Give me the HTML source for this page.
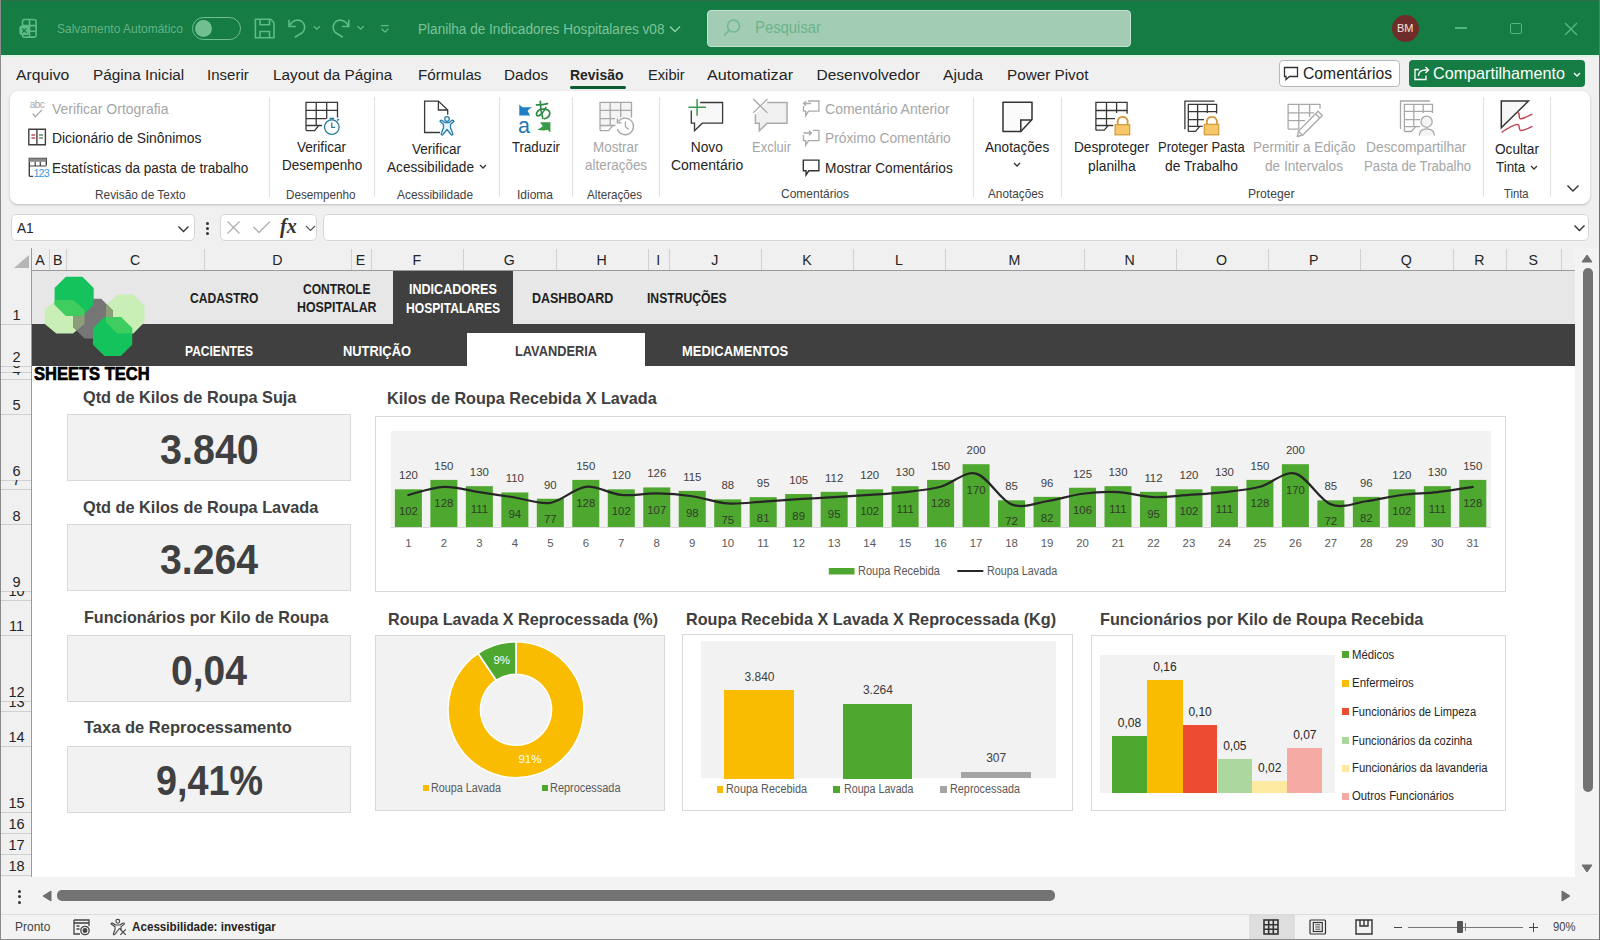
<!DOCTYPE html>
<html><head><meta charset="utf-8">
<style>
*{margin:0;padding:0;box-sizing:border-box}
html,body{width:1600px;height:940px;overflow:hidden;background:#f0f0f0;font-family:"Liberation Sans",sans-serif;color:#242424;position:relative}
.a{position:absolute}
.t{position:absolute;white-space:pre;line-height:1}
</style></head><body>
<div class="a" style="left:0;top:0;width:1600px;height:56px;background:#157c43"></div>
<div class="a" style="left:0;top:55px;width:1600px;height:2px;background:#d8f5e2"></div>
<div class="a" style="left:0;top:0;width:1600px;height:1px;background:#2f6b48"></div>
<svg class="a" style="left:0;top:0" width="400" height="56" viewBox="0 0 400 56" fill="none" stroke="#5dbb85" stroke-width="1.6">
<rect x="22.5" y="19.5" width="13.6" height="17.6" rx="2.2"/><path d="M29.5 19.5V37M22.5 25.6H36.1M29.5 31.3H36.1"/>
<rect x="19.4" y="25.8" width="9.7" height="9.3" rx="2" fill="#5dbb85" stroke="none"/><path d="M22 28.3l4.5 4.5M26.5 28.3l-4.5 4.5" stroke="#137a43" stroke-width="1.2"/>
<path d="M255.4 19.3H270.5L274 22.8V37.8H255.4Z"/><path d="M260 19.3V24.7H269.5V19.3M260 37.8V31.5H269.5V37.8"/>
<path d="M289 19.7V26.5H295.8"/><path d="M289.5 26C292 20.5 298 18.5 302 21.5C305.5 24.5 305.5 29.5 302.5 32.5L294.9 37.3"/>
<path d="M313.8 26.2l3 3 3-3M357.6 26.2l3 3 3-3" stroke-width="1.3"/>
<path d="M348.8 19.7V26.5H342"/><path d="M348.3 26C345.8 20.5 339.8 18.5 335.8 21.5C332.3 24.5 332.3 29.5 335.3 32.5L342.9 37.3"/>
<path d="M381 25.6H388.7M381.6 28.8l3.4 3.4 3.4-3.4" stroke-width="1.3"/>
</svg>
<div class="t" style="left:57.00px;top:23.20px;font-size:12.70px;color:#64b286;transform:scaleX(0.9453);transform-origin:0 0;">Salvamento Automático</div>
<div class="a" style="left:192px;top:16.5px;width:49px;height:23.5px;border:1.8px solid #6fbf90;border-radius:12px"></div>
<div class="a" style="left:194.5px;top:19.5px;width:17.5px;height:17.5px;border-radius:50%;background:#6fbf90"></div>
<div class="t" style="left:417.50px;top:22.77px;font-size:13.80px;color:#7cc49c;transform:scaleX(0.9859);transform-origin:0 0;">Planilha de Indicadores Hospitalares v08</div>
<svg class="a" style="left:669px;top:25px" width="12" height="8" viewBox="0 0 12 8" fill="none" stroke="#8fd1aa" stroke-width="1.4"><path d="M1 1.5l5 5 5-5"/></svg>
<div class="a" style="left:706.5px;top:10px;width:424px;height:36.5px;background:#a2ccb3;border:1px solid #c4e3d0;border-radius:4px"></div>
<svg class="a" style="left:722px;top:18px" width="20" height="20" viewBox="0 0 20 20" fill="none" stroke="#70b890" stroke-width="1.6"><circle cx="11.5" cy="8" r="6"/><path d="M7.3 12.2L2 17.5"/></svg>
<div class="t" style="left:755.00px;top:19.90px;font-size:16.00px;color:#6db48b;transform:scaleX(0.9275);transform-origin:0 0;">Pesquisar</div>
<div class="a" style="left:1392px;top:14.5px;width:27px;height:27px;border-radius:50%;background:#6e2d29"></div>
<div class="t" style="left:1397.25px;top:22.73px;font-size:11.50px;color:#f3e6e4;transform:scaleX(0.9565);transform-origin:0 0;">BM</div>
<div class="a" style="left:1455px;top:27px;width:12px;height:1.5px;background:#4fb87a"></div>
<div class="a" style="left:1510px;top:23px;width:12px;height:11px;border:1.5px solid #4fb87a;border-radius:2px"></div>
<svg class="a" style="left:1564px;top:21.5px" width="14" height="14" viewBox="0 0 14 14" stroke="#4fb87a" stroke-width="1.5"><path d="M1 1l12 12M13 1L1 13"/></svg>
<div class="t" style="left:16.25px;top:67.23px;font-size:15.50px;color:#242424;transform:scaleX(1.0131);transform-origin:0 0;">Arquivo</div>
<div class="t" style="left:92.50px;top:67.23px;font-size:15.50px;color:#242424;transform:scaleX(0.9897);transform-origin:0 0;">Página Inicial</div>
<div class="t" style="left:207.00px;top:67.23px;font-size:15.50px;color:#242424;transform:scaleX(0.9692);transform-origin:0 0;">Inserir</div>
<div class="t" style="left:273.25px;top:67.23px;font-size:15.50px;color:#242424;transform:scaleX(0.9883);transform-origin:0 0;">Layout da Página</div>
<div class="t" style="left:417.50px;top:67.23px;font-size:15.50px;color:#242424;transform:scaleX(0.9828);transform-origin:0 0;">Fórmulas</div>
<div class="t" style="left:503.50px;top:67.23px;font-size:15.50px;color:#242424;transform:scaleX(0.9819);transform-origin:0 0;">Dados</div>
<div class="t" style="left:570.00px;top:67.23px;font-size:15.50px;color:#242424;font-weight:bold;transform:scaleX(0.8999);transform-origin:0 0;">Revisão</div>
<div class="t" style="left:647.80px;top:67.23px;font-size:15.50px;color:#242424;transform:scaleX(0.9467);transform-origin:0 0;">Exibir</div>
<div class="t" style="left:706.50px;top:67.23px;font-size:15.50px;color:#242424;transform:scaleX(1.0399);transform-origin:0 0;">Automatizar</div>
<div class="t" style="left:816.50px;top:67.23px;font-size:15.50px;color:#242424;">Desenvolvedor</div>
<div class="t" style="left:942.50px;top:67.23px;font-size:15.50px;color:#242424;transform:scaleX(1.0087);transform-origin:0 0;">Ajuda</div>
<div class="t" style="left:1006.50px;top:67.23px;font-size:15.50px;color:#242424;transform:scaleX(0.9855);transform-origin:0 0;">Power Pivot</div>
<div class="a" style="left:570px;top:85.5px;width:56px;height:3px;border-radius:2px;background:#0f5c30"></div>
<div class="a" style="left:1278.7px;top:60.2px;width:121px;height:27.2px;background:#fff;border:1px solid #b8b8b8;border-radius:4px"></div>
<svg class="a" style="left:1283px;top:66px" width="16" height="15" viewBox="0 0 16 15" fill="none" stroke="#333" stroke-width="1.3"><path d="M1.5 1.5h13v9h-8l-3.5 3v-3h-1.5z"/></svg>
<div class="t" style="left:1302.60px;top:66.09px;font-size:15.90px;color:#242424;transform:scaleX(0.9879);transform-origin:0 0;">Comentários</div>
<div class="a" style="left:1409.2px;top:60px;width:175.8px;height:27.4px;background:#157c43;border-radius:4px"></div>
<svg class="a" style="left:1413px;top:65px" width="17" height="16" viewBox="0 0 17 16" fill="none" stroke="#fff" stroke-width="1.3"><path d="M6 4.5H2v10h11v-4"/><path d="M5.5 11c0-4 3-6 7-6h2.5"/><path d="M12.5 2l3 3-3 3"/></svg>
<div class="t" style="left:1433.30px;top:66.09px;font-size:15.90px;color:#ffffff;transform:scaleX(1.0166);transform-origin:0 0;">Compartilhamento</div>
<svg class="a" style="left:1573px;top:72px" width="8" height="6" viewBox="0 0 8 6" fill="none" stroke="#fff" stroke-width="1.3"><path d="M1 1l3 3 3-3"/></svg>
<div class="a" style="left:10px;top:91px;width:1579.5px;height:113px;background:#fff;border-radius:8px;box-shadow:0 1px 2.5px rgba(0,0,0,.22)"></div>
<div class="a" style="left:268.5px;top:97px;width:1px;height:100px;background:#e0e0e0"></div>
<div class="a" style="left:373.5px;top:97px;width:1px;height:100px;background:#e0e0e0"></div>
<div class="a" style="left:498.8px;top:97px;width:1px;height:100px;background:#e0e0e0"></div>
<div class="a" style="left:571.8px;top:97px;width:1px;height:100px;background:#e0e0e0"></div>
<div class="a" style="left:658.5px;top:97px;width:1px;height:100px;background:#e0e0e0"></div>
<div class="a" style="left:972.6px;top:97px;width:1px;height:100px;background:#e0e0e0"></div>
<div class="a" style="left:1061.0px;top:97px;width:1px;height:100px;background:#e0e0e0"></div>
<div class="a" style="left:1482.5px;top:97px;width:1px;height:100px;background:#e0e0e0"></div>
<div class="a" style="left:1550.4px;top:97px;width:1px;height:100px;background:#e0e0e0"></div>
<svg class="a" style="left:0;top:0" width="1600" height="205" viewBox="0 0 1600 205" fill="none" stroke-width="1.3" stroke-linejoin="miter">
<!-- abc check -->
<text x="29.8" y="107.8" font-family="Liberation Sans" font-size="10" fill="#a8a8a8" stroke="none" letter-spacing="-0.6">abc</text>
<path d="M32.7 113.3L35.2 116.7L42 109.9" stroke="#a8a8a8"/>
<!-- book -->
<path d="M28.8 129.3H36.9V144.8H28.8Z M36.9 129.3H45.4V144.8H36.9Z" stroke="#404040" stroke-width="1.4"/>
<path d="M31.4 135H35.2M31.4 138H35.2" stroke="#c2505a"/><path d="M39 135H43M39 138H43" stroke="#6b8a6b"/>
<!-- stats -->
<path d="M29.3 176.3V158.4H46.3V165.5" stroke="#404040" stroke-width="1.4"/><rect x="29.3" y="158.4" width="17" height="3.4" fill="#8a8a8a" stroke="none"/>
<path d="M29.3 166H46.3M35.2 161.8V166M40.3 161.8V166M29.3 176.3H33.1" stroke="#404040" stroke-width="1.2"/>
<text x="33.6" y="176.8" font-family="Liberation Sans" font-size="11" fill="#3a9ad8" stroke="none" letter-spacing="-1.1">123</text>
<!-- desempenho -->
<g stroke="#383838"><path d="M306 130.6V102.3H337.5V117.5"/><path d="M306 110.3H337.5M306 118.7H326M306 125.5H322"/><path d="M316.2 102.3V125.5M326.7 102.3V118.7"/>
<path d="M306 130.6H314.6L318.7 125.5"/></g>
<g stroke="#2a7d9c"><circle cx="331.8" cy="127.1" r="7.3" fill="#fff"/><path d="M331.8 122.5v4.8h3.4"/><path d="M329.5 118.6h4.6M337.2 120.6l1.6-1.6" stroke-width="1.6"/></g>
<!-- acessibilidade -->
<g stroke="#383838"><path d="M440 132.5H424.6V101.1H438.4L447.7 110V114.7"/><path d="M438.4 101.1V110H447.7"/></g>
<g stroke="#2a7da8" fill="#e3f4fb" stroke-linejoin="round"><circle cx="447" cy="119" r="2.3"/>
<path d="M440 121.3C440.7 119.9 441.6 120.1 442.5 120.8L445 122.7H449L451.5 120.8C452.4 120.1 453.3 119.9 454 121.3L450.5 124.5V127.8L452.8 133.7C453 135 451.6 135.5 451 134.5L447 129.5L443 134.5C442.4 135.5 441 135 441.2 133.7L443.5 127.8V124.5Z"/></g>
<!-- traduzir -->
<path d="M519.3 104.4L522.3 107.2L532.6 107.2C530 108.3 528.5 109.5 527.6 111L530.2 115.4H519.3Z" fill="#1f7fc4" stroke="none"/>
<text x="518" y="133.2" font-family="Liberation Sans" font-size="21.5" fill="#2176b8" stroke="none">a</text>
<g stroke="#2e8b46" stroke-width="1.7" stroke-linecap="round" fill="none"><path d="M536.5 104.8Q542 105 547.5 103.6"/><path d="M540.3 101.3C540.3 106 540.8 112 542.8 118.3"/><path d="M545.8 107.5C543.5 112.5 539.5 116.8 537.3 115.8C535.3 114.8 536.8 109.8 542 109.2C547 108.6 550.2 110.6 549.8 113.6C549.4 116.6 546.5 118.2 544.3 118.8"/></g>
<path d="M540 122.2H550.4V132.5L547.6 129.8C544.5 130.8 540.5 130.6 537.3 129.5C539.5 128.7 541.5 127.6 542.8 126Z" fill="#3a9c48" stroke="none"/>
<!-- alteracoes -->
<g stroke="#a8a8a8" fill="none"><path d="M600 130.6V102.3H631.5V117.5" fill="#f4f4f4"/><path d="M600 110.3H631.5M600 118.7H615M600 125.5H615.5"/><path d="M610.2 102.3V125.5M620.7 102.3V117"/>
<path d="M600 130.6H608.6L612.7 125.5"/>
<path d="M618.5 121.5A8.3 8.3 0 1 1 617.3 129" fill="#fff"/><path d="M617.4 118.5V122.8H621.6"/><path d="M625.4 121.5V126.4L628.5 129.5"/></g>
<!-- novo comentario -->
<path d="M700.2 102.5H722.6V123.2H702.3L694.5 130.7V123.2H691.3V110.4" stroke="#383838" fill="#f8f8f8"/>
<path d="M697.1 99V115.7M688.4 107.2H705.9" stroke="#3a9a50" stroke-width="1.5"/>
<!-- excluir -->
<path d="M767.1 102.5H787V123.2H767.1L759.3 130.7V123.2H755.4V114.3" stroke="#aaaaaa" fill="#f0f0f0" stroke-width="1.5"/>
<path d="M753.2 99L767.5 112.9M767.5 99L753.2 112.9" stroke="#aaaaaa"/>
<!-- small comment icons -->
<path d="M808 101H818.9V111.2H808.5L805.7 115.9V111.2H803.5V106" stroke="#aaaaaa"/><path d="M811 103.5H803.6M806 101.3L803.6 103.5L806 105.7" stroke="#aaaaaa"/>
<path d="M813 130.3H818.9V140.6H808.5L805.7 145.2V140.6H803.5V135" stroke="#aaaaaa"/><path d="M803.5 133H811.5M809 130.7L811.5 133L809 135.3" stroke="#aaaaaa"/>
<path d="M803.3 160.1H818.9V170.8H808.8L806 175V170.8H803.3Z" stroke="#333" stroke-width="1.4"/>
<!-- anotacoes -->
<path d="M1003 102.3H1032V119.4L1020.8 131.6H1003Z" stroke="#333" stroke-width="1.5" fill="#fbfbfb" stroke-linejoin="round"/>
<path d="M1020.8 131.6V119.9H1032" stroke="#333" stroke-width="1.5"/>
<!-- desproteger -->
<g stroke="#383838"><path d="M1095.9 130.2V102.3H1127.1V113.7M1095.9 110.5H1127.1M1095.9 118.6H1115M1095.9 125.5H1113.2M1106.5 102.3V125.5M1116.6 102.3V113"/><path d="M1095.9 130.2H1104.3L1108.1 125.5"/></g>
<!-- proteger pasta -->
<g stroke="#383838"><path d="M1184.9 129.3V101.2H1214.5"/><path d="M1188.3 131.4V104.4H1216.6V113.5M1188.3 111.6H1216.6M1188.3 119.6H1204M1188.3 126.4H1202.7M1197.6 104.4V126.4M1207.3 104.4V113"/><path d="M1188.3 131.4H1195.5L1199.7 126.4"/></g>
<!-- locks -->
<g stroke="#d4983a" stroke-width="1.2"><path d="M1117.7 124.7V120.5A5.2 5.2 0 0 1 1127.6 120.5V124.7" stroke-width="1.8"/><rect x="1115.1" y="124.7" width="14.6" height="10.1" fill="#f8c76a"/>
<path d="M1206.9 124.3V120.5A5.2 5.2 0 0 1 1216.8 120.5V124.3" stroke-width="1.8"/><rect x="1204.3" y="124.3" width="14.4" height="10.5" fill="#f8c76a"/></g>
<!-- permitir -->
<g stroke="#a8a8a8"><path d="M1288.1 129.1V104.4H1320V108.8M1288.1 112.8H1314M1288.1 120.7H1305M1298.8 104.4V129.1M1309.6 104.4V117M1288.1 129.1H1298.8" fill="none"/>
<path d="M1318 111.3L1322.3 115.5L1302.6 135.2L1297.3 136.5L1298.5 131.1Z" fill="#fff" stroke-linejoin="round"/><path d="M1298.5 131.1L1302.6 135.2M1315.5 113.8L1319.8 118"/></g>
<!-- descompartilhar -->
<g stroke="#a8a8a8"><path d="M1400.5 129V101H1430"/><path d="M1404.4 131.5V104.4H1432.5V113M1404.4 111.3H1432.5M1404.4 119.7H1420M1404.4 126.6H1420.2M1413.8 104.4V126.6M1423.2 104.4V113"/><path d="M1404.4 131.5H1411.3L1415.8 126.6"/>
<circle cx="1426.6" cy="121.7" r="5.6" fill="#f4f4f4"/><path d="M1419.2 135.5C1419.5 131 1422.5 128.8 1426.8 128.8S1434.2 131 1434.5 135.5" fill="#f4f4f4"/></g>
<!-- tinta -->
<path d="M1501.3 101.1H1528.4L1501.3 127.8Z" stroke="#333" stroke-width="1.5" fill="#f7f7f7"/>
<path d="M1517 112C1521 113 1518 117.5 1520 118.6C1522 119.6 1527 116.5 1532.4 114.2" stroke="#c04452" stroke-width="1.4"/>
<path d="M1501.5 132.3C1506 129.5 1512 125.5 1516 124.6C1521 123.6 1518 129.5 1520.5 130.4C1523 131.2 1528 128.5 1532.4 126.4" stroke="#c04452" stroke-width="1.4"/>
</svg>
<div class="t" style="left:51.50px;top:102.97px;font-size:13.80px;color:#a6a6a6;transform:scaleX(1.0128);transform-origin:0 0;">Verificar Ortografia</div>
<div class="t" style="left:52.00px;top:132.47px;font-size:13.80px;color:#242424;transform:scaleX(1.0048);transform-origin:0 0;">Dicionário de Sinônimos</div>
<div class="t" style="left:52.00px;top:161.97px;font-size:13.80px;color:#242424;transform:scaleX(0.9811);transform-origin:0 0;">Estatísticas da pasta de trabalho</div>
<div class="t" style="left:95.30px;top:188.53px;font-size:12.20px;color:#424242;transform:scaleX(0.9723);transform-origin:0 0;">Revisão de Texto</div>
<div class="t" style="left:297.00px;top:140.97px;font-size:13.80px;color:#242424;transform:scaleX(0.9831);transform-origin:0 0;">Verificar</div>
<div class="t" style="left:281.70px;top:159.47px;font-size:13.80px;color:#242424;transform:scaleX(0.9783);transform-origin:0 0;">Desempenho</div>
<div class="t" style="left:285.50px;top:188.83px;font-size:12.20px;color:#424242;transform:scaleX(0.9586);transform-origin:0 0;">Desempenho</div>
<div class="t" style="left:412.00px;top:143.17px;font-size:13.80px;color:#242424;transform:scaleX(0.9831);transform-origin:0 0;">Verificar</div>
<div class="t" style="left:386.70px;top:161.17px;font-size:13.80px;color:#242424;transform:scaleX(0.9864);transform-origin:0 0;">Acessibilidade</div>
<svg class="a" style="left:479.0px;top:164.0px" width="8" height="6" viewBox="0 0 8 6" fill="none" stroke="#333" stroke-width="1.3"><path d="M1 1l3 3 3-3"/></svg>
<div class="t" style="left:397.20px;top:188.83px;font-size:12.20px;color:#424242;transform:scaleX(0.9766);transform-origin:0 0;">Acessibilidade</div>
<div class="t" style="left:512.00px;top:140.97px;font-size:13.80px;color:#242424;transform:scaleX(0.9582);transform-origin:0 0;">Traduzir</div>
<div class="t" style="left:516.50px;top:188.53px;font-size:12.20px;color:#424242;transform:scaleX(0.9838);transform-origin:0 0;">Idioma</div>
<div class="t" style="left:592.50px;top:140.97px;font-size:13.80px;color:#a6a6a6;transform:scaleX(0.9729);transform-origin:0 0;">Mostrar</div>
<div class="t" style="left:584.70px;top:159.47px;font-size:13.80px;color:#a6a6a6;transform:scaleX(0.9756);transform-origin:0 0;">alterações</div>
<div class="t" style="left:586.50px;top:188.53px;font-size:12.20px;color:#424242;transform:scaleX(0.9584);transform-origin:0 0;">Alterações</div>
<div class="t" style="left:690.70px;top:140.97px;font-size:13.80px;color:#242424;">Novo</div>
<div class="t" style="left:670.80px;top:159.47px;font-size:13.80px;color:#242424;transform:scaleX(1.0122);transform-origin:0 0;">Comentário</div>
<div class="t" style="left:751.60px;top:141.07px;font-size:13.80px;color:#a6a6a6;transform:scaleX(0.9443);transform-origin:0 0;">Excluir</div>
<div class="t" style="left:825.30px;top:103.27px;font-size:13.80px;color:#a6a6a6;transform:scaleX(1.0163);transform-origin:0 0;">Comentário Anterior</div>
<div class="t" style="left:825.00px;top:132.47px;font-size:13.80px;color:#a6a6a6;">Próximo Comentário</div>
<div class="t" style="left:825.00px;top:162.37px;font-size:13.80px;color:#242424;transform:scaleX(0.9921);transform-origin:0 0;">Mostrar Comentários</div>
<div class="t" style="left:780.70px;top:188.13px;font-size:12.20px;color:#424242;transform:scaleX(0.9842);transform-origin:0 0;">Comentários</div>
<div class="t" style="left:985.30px;top:141.07px;font-size:13.80px;color:#242424;transform:scaleX(0.9846);transform-origin:0 0;">Anotações</div>
<svg class="a" style="left:1013.0px;top:161.5px" width="8" height="6" viewBox="0 0 8 6" fill="none" stroke="#333" stroke-width="1.3"><path d="M1 1l3 3 3-3"/></svg>
<div class="t" style="left:988.00px;top:188.13px;font-size:12.20px;color:#424242;transform:scaleX(0.9671);transform-origin:0 0;">Anotações</div>
<div class="t" style="left:1074.40px;top:141.47px;font-size:13.80px;color:#242424;transform:scaleX(0.9903);transform-origin:0 0;">Desproteger</div>
<div class="t" style="left:1088.00px;top:159.97px;font-size:13.80px;color:#242424;">planilha</div>
<div class="t" style="left:1158.00px;top:141.47px;font-size:13.80px;color:#242424;transform:scaleX(0.9410);transform-origin:0 0;">Proteger Pasta</div>
<div class="t" style="left:1165.00px;top:159.97px;font-size:13.80px;color:#242424;">de Trabalho</div>
<div class="t" style="left:1252.80px;top:141.47px;font-size:13.80px;color:#a6a6a6;transform:scaleX(0.9748);transform-origin:0 0;">Permitir a Edição</div>
<div class="t" style="left:1264.80px;top:159.97px;font-size:13.80px;color:#a6a6a6;transform:scaleX(0.9873);transform-origin:0 0;">de Intervalos</div>
<div class="t" style="left:1366.00px;top:141.47px;font-size:13.80px;color:#a6a6a6;">Descompartilhar</div>
<div class="t" style="left:1363.60px;top:159.97px;font-size:13.80px;color:#a6a6a6;transform:scaleX(0.9571);transform-origin:0 0;">Pasta de Trabalho</div>
<div class="t" style="left:1248.00px;top:188.43px;font-size:12.20px;color:#424242;transform:scaleX(0.9947);transform-origin:0 0;">Proteger</div>
<div class="t" style="left:1495.00px;top:142.87px;font-size:13.80px;color:#242424;transform:scaleX(0.9891);transform-origin:0 0;">Ocultar</div>
<div class="t" style="left:1495.70px;top:160.67px;font-size:13.80px;color:#242424;transform:scaleX(0.9711);transform-origin:0 0;">Tinta</div>
<svg class="a" style="left:1530.0px;top:165.0px" width="8" height="6" viewBox="0 0 8 6" fill="none" stroke="#333" stroke-width="1.3"><path d="M1 1l3 3 3-3"/></svg>
<div class="t" style="left:1504.00px;top:188.03px;font-size:12.20px;color:#424242;transform:scaleX(0.9191);transform-origin:0 0;">Tinta</div>
<svg class="a" style="left:1566px;top:184px" width="14" height="9" viewBox="0 0 14 9" fill="none" stroke="#333" stroke-width="1.4"><path d="M1.5 1.5l5.5 5.5 5.5-5.5"/></svg>
<div class="a" style="left:10.5px;top:214.4px;width:184.5px;height:26.2px;background:#fff;border:1px solid #d6d6d6;border-radius:5px"></div>
<div class="t" style="left:17.00px;top:220.93px;font-size:14.20px;color:#242424;transform:scaleX(0.9620);transform-origin:0 0;">A1</div>
<svg class="a" style="left:177px;top:225px" width="13" height="8" viewBox="0 0 13 8" fill="none" stroke="#333" stroke-width="1.4"><path d="M1.5 1.5l5 5 5-5"/></svg>
<div class="a" style="left:206px;top:221.5px;width:3px;height:3px;border-radius:50%;background:#333"></div>
<div class="a" style="left:206px;top:226.5px;width:3px;height:3px;border-radius:50%;background:#333"></div>
<div class="a" style="left:206px;top:231.5px;width:3px;height:3px;border-radius:50%;background:#333"></div>
<div class="a" style="left:220px;top:214.4px;width:97px;height:26.2px;background:#fff;border:1px solid #d6d6d6;border-radius:5px"></div>
<svg class="a" style="left:226px;top:220px" width="15" height="15" viewBox="0 0 15 15" stroke="#b0b0b0" stroke-width="1.3"><path d="M1.5 1.5l12 12M13.5 1.5l-12 12"/></svg>
<svg class="a" style="left:252px;top:220px" width="19" height="14" viewBox="0 0 19 14" fill="none" stroke="#b0b0b0" stroke-width="1.3"><path d="M1.5 7l5.5 5.5 11-11"/></svg>
<div class="t" style="left:280px;top:216px;font-family:'Liberation Serif',serif;font-style:italic;font-weight:bold;font-size:20px;color:#333">fx</div>
<svg class="a" style="left:305px;top:225px" width="11" height="7" viewBox="0 0 11 7" fill="none" stroke="#555" stroke-width="1.2"><path d="M1 1l4.5 4.5 4.5-4.5"/></svg>
<div class="a" style="left:323.2px;top:214.4px;width:1265.5px;height:26.2px;background:#fff;border:1px solid #d6d6d6;border-radius:5px"></div>
<svg class="a" style="left:1573px;top:224px" width="13" height="8" viewBox="0 0 13 8" fill="none" stroke="#333" stroke-width="1.4"><path d="M1.5 1.5l5 5 5-5"/></svg>
<div class="a" style="left:0;top:248px;width:1575px;height:22px;background:#f0f0f0"></div>
<div class="a" style="left:0;top:269.5px;width:1575px;height:1px;background:#9b9b9b"></div>
<svg class="a" style="left:13px;top:254px" width="17" height="15" viewBox="0 0 17 15"><path d="M16 1v13H1z" fill="#b5b5b5"/></svg>
<div class="a" style="left:31px;top:248px;width:1px;height:629px;background:#9b9b9b"></div>
<div class="a" style="left:49.2px;top:249px;width:1px;height:20.5px;background:#d0d0d0"></div>
<div class="t" style="left:35.37px;top:253.43px;font-size:14.20px;color:#242424;">A</div>
<div class="a" style="left:66.4px;top:249px;width:1px;height:20.5px;background:#d0d0d0"></div>
<div class="t" style="left:53.07px;top:253.43px;font-size:14.20px;color:#242424;">B</div>
<div class="a" style="left:204.0px;top:249px;width:1px;height:20.5px;background:#d0d0d0"></div>
<div class="t" style="left:130.07px;top:253.43px;font-size:14.20px;color:#242424;">C</div>
<div class="a" style="left:350.6px;top:249px;width:1px;height:20.5px;background:#d0d0d0"></div>
<div class="t" style="left:272.18px;top:253.43px;font-size:14.20px;color:#242424;">D</div>
<div class="a" style="left:370.5px;top:249px;width:1px;height:20.5px;background:#d0d0d0"></div>
<div class="t" style="left:355.82px;top:253.43px;font-size:14.20px;color:#242424;">E</div>
<div class="a" style="left:463.0px;top:249px;width:1px;height:20.5px;background:#d0d0d0"></div>
<div class="t" style="left:412.41px;top:253.43px;font-size:14.20px;color:#242424;">F</div>
<div class="a" style="left:555.7px;top:249px;width:1px;height:20.5px;background:#d0d0d0"></div>
<div class="t" style="left:503.83px;top:253.43px;font-size:14.20px;color:#242424;">G</div>
<div class="a" style="left:647.5px;top:249px;width:1px;height:20.5px;background:#d0d0d0"></div>
<div class="t" style="left:596.48px;top:253.43px;font-size:14.20px;color:#242424;">H</div>
<div class="a" style="left:668.8px;top:249px;width:1px;height:20.5px;background:#d0d0d0"></div>
<div class="t" style="left:656.17px;top:253.43px;font-size:14.20px;color:#242424;">I</div>
<div class="a" style="left:761.0px;top:249px;width:1px;height:20.5px;background:#d0d0d0"></div>
<div class="t" style="left:711.35px;top:253.43px;font-size:14.20px;color:#242424;">J</div>
<div class="a" style="left:853.0px;top:249px;width:1px;height:20.5px;background:#d0d0d0"></div>
<div class="t" style="left:802.27px;top:253.43px;font-size:14.20px;color:#242424;">K</div>
<div class="a" style="left:945.0px;top:249px;width:1px;height:20.5px;background:#d0d0d0"></div>
<div class="t" style="left:895.05px;top:253.43px;font-size:14.20px;color:#242424;">L</div>
<div class="a" style="left:1083.6px;top:249px;width:1px;height:20.5px;background:#d0d0d0"></div>
<div class="t" style="left:1008.39px;top:253.43px;font-size:14.20px;color:#242424;">M</div>
<div class="a" style="left:1175.5px;top:249px;width:1px;height:20.5px;background:#d0d0d0"></div>
<div class="t" style="left:1124.42px;top:253.43px;font-size:14.20px;color:#242424;">N</div>
<div class="a" style="left:1267.7px;top:249px;width:1px;height:20.5px;background:#d0d0d0"></div>
<div class="t" style="left:1216.08px;top:253.43px;font-size:14.20px;color:#242424;">O</div>
<div class="a" style="left:1360.0px;top:249px;width:1px;height:20.5px;background:#d0d0d0"></div>
<div class="t" style="left:1309.12px;top:253.43px;font-size:14.20px;color:#242424;">P</div>
<div class="a" style="left:1452.6px;top:249px;width:1px;height:20.5px;background:#d0d0d0"></div>
<div class="t" style="left:1400.78px;top:253.43px;font-size:14.20px;color:#242424;">Q</div>
<div class="a" style="left:1506.0px;top:249px;width:1px;height:20.5px;background:#d0d0d0"></div>
<div class="t" style="left:1474.17px;top:253.43px;font-size:14.20px;color:#242424;">R</div>
<div class="a" style="left:1560.6px;top:249px;width:1px;height:20.5px;background:#d0d0d0"></div>
<div class="t" style="left:1528.57px;top:253.43px;font-size:14.20px;color:#242424;">S</div>
<div class="a" style="left:0;top:270px;width:31px;height:607px;background:#f0f0f0"></div>
<div class="a" style="left:0;top:323.8px;width:31px;height:1px;background:#d0d0d0"></div>
<div class="a" style="left:0;top:270.0px;width:31px;height:54.3px;overflow:hidden"><div class="t" style="left:1px;width:31px;text-align:center;top:38.1px;font-size:14.5px;color:#242424">1</div></div>
<div class="a" style="left:0;top:365.5px;width:31px;height:1px;background:#d0d0d0"></div>
<div class="a" style="left:0;top:324.3px;width:31px;height:41.7px;overflow:hidden"><div class="t" style="left:1px;width:31px;text-align:center;top:25.5px;font-size:14.5px;color:#242424">2</div></div>
<div class="a" style="left:0;top:371.9px;width:31px;height:1px;background:#d0d0d0"></div>
<div class="a" style="left:0;top:366.3px;width:31px;height:6.1px;overflow:hidden"><div class="t" style="left:1px;width:31px;text-align:center;top:-10.1px;font-size:14.5px;color:#242424">3</div></div>
<div class="a" style="left:0;top:378.8px;width:31px;height:1px;background:#d0d0d0"></div>
<div class="a" style="left:0;top:372.4px;width:31px;height:6.9px;overflow:hidden"><div class="t" style="left:1px;width:31px;text-align:center;top:-9.3px;font-size:14.5px;color:#242424">4</div></div>
<div class="a" style="left:0;top:413.9px;width:31px;height:1px;background:#d0d0d0"></div>
<div class="a" style="left:0;top:379.0px;width:31px;height:35.4px;overflow:hidden"><div class="t" style="left:1px;width:31px;text-align:center;top:19.2px;font-size:14.5px;color:#242424">5</div></div>
<div class="a" style="left:0;top:479.5px;width:31px;height:1px;background:#d0d0d0"></div>
<div class="a" style="left:0;top:414.4px;width:31px;height:65.6px;overflow:hidden"><div class="t" style="left:1px;width:31px;text-align:center;top:49.4px;font-size:14.5px;color:#242424">6</div></div>
<div class="a" style="left:0;top:488.8px;width:31px;height:1px;background:#d0d0d0"></div>
<div class="a" style="left:0;top:480.0px;width:31px;height:9.3px;overflow:hidden"><div class="t" style="left:1px;width:31px;text-align:center;top:-6.9px;font-size:14.5px;color:#242424">7</div></div>
<div class="a" style="left:0;top:524.3px;width:31px;height:1px;background:#d0d0d0"></div>
<div class="a" style="left:0;top:489.3px;width:31px;height:35.5px;overflow:hidden"><div class="t" style="left:1px;width:31px;text-align:center;top:19.3px;font-size:14.5px;color:#242424">8</div></div>
<div class="a" style="left:0;top:590.8px;width:31px;height:1px;background:#d0d0d0"></div>
<div class="a" style="left:0;top:524.8px;width:31px;height:66.5px;overflow:hidden"><div class="t" style="left:1px;width:31px;text-align:center;top:50.3px;font-size:14.5px;color:#242424">9</div></div>
<div class="a" style="left:0;top:599.9px;width:31px;height:1px;background:#d0d0d0"></div>
<div class="a" style="left:0;top:591.3px;width:31px;height:9.1px;overflow:hidden"><div class="t" style="left:1px;width:31px;text-align:center;top:-7.1px;font-size:14.5px;color:#242424">10</div></div>
<div class="a" style="left:0;top:634.9px;width:31px;height:1px;background:#d0d0d0"></div>
<div class="a" style="left:0;top:600.4px;width:31px;height:35.0px;overflow:hidden"><div class="t" style="left:1px;width:31px;text-align:center;top:18.8px;font-size:14.5px;color:#242424">11</div></div>
<div class="a" style="left:0;top:700.9px;width:31px;height:1px;background:#d0d0d0"></div>
<div class="a" style="left:0;top:635.4px;width:31px;height:66.0px;overflow:hidden"><div class="t" style="left:1px;width:31px;text-align:center;top:49.8px;font-size:14.5px;color:#242424">12</div></div>
<div class="a" style="left:0;top:710.5px;width:31px;height:1px;background:#d0d0d0"></div>
<div class="a" style="left:0;top:701.4px;width:31px;height:9.6px;overflow:hidden"><div class="t" style="left:1px;width:31px;text-align:center;top:-6.6px;font-size:14.5px;color:#242424">13</div></div>
<div class="a" style="left:0;top:745.5px;width:31px;height:1px;background:#d0d0d0"></div>
<div class="a" style="left:0;top:711.0px;width:31px;height:35.0px;overflow:hidden"><div class="t" style="left:1px;width:31px;text-align:center;top:18.8px;font-size:14.5px;color:#242424">14</div></div>
<div class="a" style="left:0;top:812.0px;width:31px;height:1px;background:#d0d0d0"></div>
<div class="a" style="left:0;top:746.0px;width:31px;height:66.5px;overflow:hidden"><div class="t" style="left:1px;width:31px;text-align:center;top:50.3px;font-size:14.5px;color:#242424">15</div></div>
<div class="a" style="left:0;top:832.9px;width:31px;height:1px;background:#d0d0d0"></div>
<div class="a" style="left:0;top:812.5px;width:31px;height:20.9px;overflow:hidden"><div class="t" style="left:1px;width:31px;text-align:center;top:4.7px;font-size:14.5px;color:#242424">16</div></div>
<div class="a" style="left:0;top:854.1px;width:31px;height:1px;background:#d0d0d0"></div>
<div class="a" style="left:0;top:833.4px;width:31px;height:21.2px;overflow:hidden"><div class="t" style="left:1px;width:31px;text-align:center;top:5.0px;font-size:14.5px;color:#242424">17</div></div>
<div class="a" style="left:0;top:875.2px;width:31px;height:1px;background:#d0d0d0"></div>
<div class="a" style="left:0;top:854.6px;width:31px;height:21.1px;overflow:hidden"><div class="t" style="left:1px;width:31px;text-align:center;top:4.9px;font-size:14.5px;color:#242424">18</div></div>
<div class="a" style="left:1575px;top:248px;width:23px;height:629px;background:#f3f3f3"></div>
<svg class="a" style="left:1581px;top:254px" width="12" height="9" viewBox="0 0 12 9"><path d="M6 1l5 7H1z" fill="#6e6e6e" stroke="#6e6e6e" stroke-linejoin="round"/></svg>
<div class="a" style="left:1583px;top:268px;width:9.5px;height:524px;border-radius:5px;background:#737373"></div>
<svg class="a" style="left:1581px;top:864px" width="12" height="9" viewBox="0 0 12 9"><path d="M6 8l5-7H1z" fill="#6e6e6e" stroke="#6e6e6e" stroke-linejoin="round"/></svg>
<div class="a" style="left:1px;top:877px;width:1597px;height:37px;background:#f3f3f3"></div>
<div class="a" style="left:17.5px;top:889.5px;width:3.2px;height:3.2px;border-radius:50%;background:#333"></div>
<div class="a" style="left:17.5px;top:895.0px;width:3.2px;height:3.2px;border-radius:50%;background:#333"></div>
<div class="a" style="left:17.5px;top:900.5px;width:3.2px;height:3.2px;border-radius:50%;background:#333"></div>
<svg class="a" style="left:42px;top:890px" width="10" height="12" viewBox="0 0 10 12"><path d="M1 6l8-5v10z" fill="#6e6e6e" stroke="#6e6e6e" stroke-linejoin="round"/></svg>
<div class="a" style="left:57px;top:890px;width:998px;height:10.5px;border-radius:5px;background:#737373"></div>
<svg class="a" style="left:1561px;top:890px" width="10" height="12" viewBox="0 0 10 12"><path d="M9 6l-8-5v10z" fill="#6e6e6e" stroke="#6e6e6e" stroke-linejoin="round"/></svg>
<div class="a" style="left:1px;top:914px;width:1597px;height:26px;background:#f3f3f3;border-top:1px solid #dcdcdc"></div>
<div class="a" style="left:0;top:938.5px;width:1600px;height:1.5px;background:#8a8a8a"></div>
<div class="t" style="left:15.00px;top:921.12px;font-size:12.80px;color:#424242;transform:scaleX(0.9359);transform-origin:0 0;">Pronto</div>
<svg class="a" style="left:73px;top:919px" width="18" height="17" viewBox="0 0 18 17" fill="none" stroke="#444" stroke-width="1.3">
<path d="M1 1h15v6M1 1v14h6"/><path d="M1 4h15" stroke-width="1.6"/><path d="M3.5 7h3M3.5 10h3"/><circle cx="12" cy="11.5" r="4.2"/><circle cx="12" cy="11.5" r="1.8" fill="#444"/></svg>
<svg class="a" style="left:0;top:0" width="140" height="940" viewBox="0 0 140 940" fill="none" stroke="#444" stroke-width="1.1" stroke-linejoin="round">
<circle cx="117.8" cy="921.3" r="1.9"/>
<path d="M111 923.8C111.5 922.8 112.3 922.8 113 923.3L115.5 925H120L122.5 923.3C123.2 922.8 124 922.8 124.5 923.8L121 926.8V929.5L119.5 928.5L117.8 930.5L114.8 934.3C114.3 935 113.2 934.6 113.4 933.8L115 929.5V926.8Z"/>
<path d="M120.3 929.3l5.5 5.5M125.8 929.3l-5.5 5.5" stroke-width="1.2"/></svg>
<div class="t" style="left:131.80px;top:921.12px;font-size:12.80px;color:#242424;font-weight:bold;transform:scaleX(0.9108);transform-origin:0 0;">Acessibilidade: investigar</div>
<div class="a" style="left:1249px;top:914.5px;width:45.7px;height:24px;background:#dedede"></div>
<svg class="a" style="left:1263px;top:919px" width="16" height="16" viewBox="0 0 16 16" fill="none" stroke="#333" stroke-width="1.6">
<rect x="1" y="1" width="14" height="14"/><path d="M5.7 1v14M10.3 1v14M1 5.7h14M1 10.3h14"/></svg>
<svg class="a" style="left:1309px;top:918.5px" width="18" height="16" viewBox="0 0 18 16" fill="none" stroke="#333" stroke-width="1.2">
<rect x="1" y="1" width="15.5" height="14" rx="1"/><rect x="4.3" y="3.5" width="9" height="9"/><path d="M6.3 5.8h5M6.3 8h5M6.3 10.2h5" stroke-width="0.9"/></svg>
<svg class="a" style="left:1355px;top:919px" width="18" height="16" viewBox="0 0 18 16" fill="none" stroke="#333" stroke-width="1.4">
<path d="M1 1h16v14H1z"/><path d="M5 1v6h8V1M9 1v6"/></svg>
<div class="a" style="left:1393.7px;top:926.5px;width:8.5px;height:1.3px;background:#444"></div>
<div class="a" style="left:1408px;top:927px;width:115px;height:1px;background:#777"></div>
<div class="a" style="left:1457px;top:920.7px;width:6px;height:12.5px;background:#555;border-radius:1px"></div>
<div class="a" style="left:1465px;top:923px;width:1px;height:8px;background:#777"></div>
<div class="a" style="left:1529px;top:926.5px;width:8.5px;height:1.3px;background:#444"></div>
<div class="a" style="left:1532.6px;top:922.7px;width:1.3px;height:9px;background:#444"></div>
<div class="t" style="left:1552.80px;top:920.88px;font-size:12.50px;color:#424242;transform:scaleX(0.8989);transform-origin:0 0;">90%</div>
<div class="a" style="left:32px;top:270.5px;width:1543px;height:606.5px;background:#fff"></div>
<div class="a" style="left:32px;top:270.5px;width:1543px;height:53.8px;background:#e7e7e7"></div>
<div class="a" style="left:392.5px;top:271px;width:120.3px;height:53.3px;background:#404040"></div>
<div class="a" style="left:32px;top:324.3px;width:1543px;height:41.7px;background:#404040"></div>
<div class="a" style="left:466.9px;top:333.4px;width:178.1px;height:32.6px;background:#fff"></div>
<div class="t" style="left:189.50px;top:290.00px;font-size:15.30px;color:#1f1f1f;font-weight:bold;transform:scaleX(0.7902);transform-origin:0 0;">CADASTRO</div>
<div class="t" style="left:302.50px;top:280.75px;font-size:15.30px;color:#1f1f1f;font-weight:bold;transform:scaleX(0.7863);transform-origin:0 0;">CONTROLE</div>
<div class="t" style="left:296.75px;top:299.00px;font-size:15.30px;color:#1f1f1f;font-weight:bold;transform:scaleX(0.8088);transform-origin:0 0;">HOSPITALAR</div>
<div class="t" style="left:408.75px;top:281.39px;font-size:15.30px;color:#fff;font-weight:bold;transform:scaleX(0.8203);transform-origin:0 0;">INDICADORES</div>
<div class="t" style="left:405.60px;top:299.50px;font-size:15.30px;color:#fff;font-weight:bold;transform:scaleX(0.7927);transform-origin:0 0;">HOSPITALARES</div>
<div class="t" style="left:531.60px;top:290.00px;font-size:15.30px;color:#1f1f1f;font-weight:bold;transform:scaleX(0.8166);transform-origin:0 0;">DASHBOARD</div>
<div class="t" style="left:646.60px;top:290.00px;font-size:15.30px;color:#1f1f1f;font-weight:bold;transform:scaleX(0.7941);transform-origin:0 0;">INSTRUÇÕES</div>
<div class="t" style="left:185.00px;top:343.00px;font-size:15.30px;color:#fff;font-weight:bold;transform:scaleX(0.7868);transform-origin:0 0;">PACIENTES</div>
<div class="t" style="left:343.00px;top:343.00px;font-size:15.30px;color:#fff;font-weight:bold;transform:scaleX(0.8423);transform-origin:0 0;">NUTRIÇÃO</div>
<div class="t" style="left:515.00px;top:342.50px;font-size:15.30px;color:#404040;font-weight:bold;transform:scaleX(0.8366);transform-origin:0 0;">LAVANDERIA</div>
<div class="t" style="left:681.60px;top:342.50px;font-size:15.30px;color:#fff;font-weight:bold;transform:scaleX(0.8462);transform-origin:0 0;">MEDICAMENTOS</div>
<svg class="a" style="left:0;top:0" width="160" height="390" viewBox="0 0 160 390">
<defs><clipPath id="cL2"><polygon points="56.3,300.0 73.0,300.0 84.5,309.7 84.5,323.9 73.0,333.6 56.3,333.6 44.8,323.9 44.8,309.7"/></clipPath><clipPath id="cL4"><polygon points="117.2,294.5 133.3,294.5 144.5,305.8 144.5,322.3 133.3,333.6 117.2,333.6 106.0,322.3 106.0,305.8"/></clipPath></defs>
<polygon points="56.3,300.0 73.0,300.0 84.5,309.7 84.5,323.9 73.0,333.6 56.3,333.6 44.8,323.9 44.8,309.7" fill="#c9eeb6"/><polygon points="117.2,294.5 133.3,294.5 144.5,305.8 144.5,322.3 133.3,333.6 117.2,333.6 106.0,322.3 106.0,305.8" fill="#c9eeb6"/>
<polygon points="84.5,298.7 101.2,298.7 112.7,310.2 112.7,327.0 101.2,338.5 84.5,338.5 73.0,327.0 73.0,310.2" fill="#767676"/>
<g clip-path="url(#cL2)"><polygon points="84.5,298.7 101.2,298.7 112.7,310.2 112.7,327.0 101.2,338.5 84.5,338.5 73.0,327.0 73.0,310.2" fill="#8c9e78"/></g><g clip-path="url(#cL4)"><polygon points="84.5,298.7 101.2,298.7 112.7,310.2 112.7,327.0 101.2,338.5 84.5,338.5 73.0,327.0 73.0,310.2" fill="#8c9e78"/></g>
<polygon points="65.9,276.7 82.4,276.7 93.7,288.0 93.7,304.5 82.4,315.8 65.9,315.8 54.6,304.5 54.6,288.0" fill="#14c35c"/><polygon points="104.4,317.0 120.8,317.0 132.2,328.3 132.2,344.7 120.8,356.0 104.4,356.0 93.0,344.7 93.0,328.3" fill="#14c35c"/>
<g clip-path="url(#cL2)"><polygon points="65.9,276.7 82.4,276.7 93.7,288.0 93.7,304.5 82.4,315.8 65.9,315.8 54.6,304.5 54.6,288.0" fill="#3fcd5f"/></g><g clip-path="url(#cL4)"><polygon points="104.4,317.0 120.8,317.0 132.2,328.3 132.2,344.7 120.8,356.0 104.4,356.0 93.0,344.7 93.0,328.3" fill="#3fcd5f"/></g>
</svg>
<div class="t" style="left:33.70px;top:365.87px;font-size:17.80px;color:#000;font-weight:bold;transform:scaleX(0.9285);transform-origin:0 0;-webkit-text-stroke:0.7px #000;">SHEETS TECH</div>
<div class="a" style="left:66.5px;top:414.0px;width:284.3px;height:66.5px;background:#f2f2f2;border:1px solid #d9d9d9"></div>
<div class="t" style="left:83.00px;top:388.56px;font-size:16.40px;color:#404040;font-weight:bold;transform:scaleX(0.9929);transform-origin:0 0;">Qtd de Kilos de Roupa Suja</div>
<div class="t" style="left:159.60px;top:428.68px;font-size:42.50px;color:#404040;font-weight:bold;transform:scaleX(0.9289);transform-origin:0 0;">3.840</div>
<div class="a" style="left:66.5px;top:524.0px;width:284.3px;height:67.4px;background:#f2f2f2;border:1px solid #d9d9d9"></div>
<div class="t" style="left:83.00px;top:498.56px;font-size:16.40px;color:#404040;font-weight:bold;transform:scaleX(0.9937);transform-origin:0 0;">Qtd de Kilos de Roupa Lavada</div>
<div class="t" style="left:159.55px;top:539.27px;font-size:42.50px;color:#404040;font-weight:bold;transform:scaleX(0.9223);transform-origin:0 0;">3.264</div>
<div class="a" style="left:66.5px;top:635.0px;width:284.3px;height:67.0px;background:#f2f2f2;border:1px solid #d9d9d9"></div>
<div class="t" style="left:83.90px;top:609.06px;font-size:16.40px;color:#404040;font-weight:bold;transform:scaleX(0.9831);transform-origin:0 0;">Funcionários por Kilo de Roupa</div>
<div class="t" style="left:171.00px;top:649.67px;font-size:42.50px;color:#404040;font-weight:bold;transform:scaleX(0.9188);transform-origin:0 0;">0,04</div>
<div class="a" style="left:66.5px;top:745.7px;width:284.3px;height:66.9px;background:#f2f2f2;border:1px solid #d9d9d9"></div>
<div class="t" style="left:83.90px;top:719.36px;font-size:16.40px;color:#404040;font-weight:bold;transform:scaleX(1.0069);transform-origin:0 0;">Taxa de Reprocessamento</div>
<div class="t" style="left:155.50px;top:760.17px;font-size:42.50px;color:#404040;font-weight:bold;transform:scaleX(0.8879);transform-origin:0 0;">9,41%</div>
<div class="t" style="left:387.10px;top:389.66px;font-size:16.40px;color:#404040;font-weight:bold;transform:scaleX(0.9870);transform-origin:0 0;">Kilos de Roupa Recebida X Lavada</div>
<div class="t" style="left:388.20px;top:610.86px;font-size:16.40px;color:#404040;font-weight:bold;transform:scaleX(0.9851);transform-origin:0 0;">Roupa Lavada X Reprocessada (%)</div>
<div class="t" style="left:685.70px;top:611.16px;font-size:16.40px;color:#404040;font-weight:bold;transform:scaleX(0.9886);transform-origin:0 0;">Roupa Recebida X Lavada X Reprocessada (Kg)</div>
<div class="t" style="left:1100.10px;top:610.66px;font-size:16.40px;color:#404040;font-weight:bold;transform:scaleX(0.9919);transform-origin:0 0;">Funcionários por Kilo de Roupa Recebida</div>
<div class="a" style="left:375.3px;top:416px;width:1130.7px;height:176px;background:#fff;border:1px solid #d9d9d9"></div>
<div class="a" style="left:390.6px;top:431.3px;width:1100.1px;height:96px;background:#f2f2f2"></div>
<svg class="a" style="left:0;top:0" width="1600" height="600" viewBox="0 0 1600 600"><rect x="394.90" y="489.32" width="27.00" height="37.68" fill="#4ea72e"/><rect x="430.38" y="479.90" width="27.00" height="47.10" fill="#4ea72e"/><rect x="465.86" y="486.18" width="27.00" height="40.82" fill="#4ea72e"/><rect x="501.34" y="492.46" width="27.00" height="34.54" fill="#4ea72e"/><rect x="536.82" y="498.74" width="27.00" height="28.26" fill="#4ea72e"/><rect x="572.30" y="479.90" width="27.00" height="47.10" fill="#4ea72e"/><rect x="607.78" y="489.32" width="27.00" height="37.68" fill="#4ea72e"/><rect x="643.26" y="487.44" width="27.00" height="39.56" fill="#4ea72e"/><rect x="678.74" y="490.89" width="27.00" height="36.11" fill="#4ea72e"/><rect x="714.22" y="499.37" width="27.00" height="27.63" fill="#4ea72e"/><rect x="749.70" y="497.17" width="27.00" height="29.83" fill="#4ea72e"/><rect x="785.18" y="494.03" width="27.00" height="32.97" fill="#4ea72e"/><rect x="820.66" y="491.83" width="27.00" height="35.17" fill="#4ea72e"/><rect x="856.14" y="489.32" width="27.00" height="37.68" fill="#4ea72e"/><rect x="891.62" y="486.18" width="27.00" height="40.82" fill="#4ea72e"/><rect x="927.10" y="479.90" width="27.00" height="47.10" fill="#4ea72e"/><rect x="962.58" y="464.20" width="27.00" height="62.80" fill="#4ea72e"/><rect x="998.06" y="500.31" width="27.00" height="26.69" fill="#4ea72e"/><rect x="1033.54" y="496.86" width="27.00" height="30.14" fill="#4ea72e"/><rect x="1069.02" y="487.75" width="27.00" height="39.25" fill="#4ea72e"/><rect x="1104.50" y="486.18" width="27.00" height="40.82" fill="#4ea72e"/><rect x="1139.98" y="491.83" width="27.00" height="35.17" fill="#4ea72e"/><rect x="1175.46" y="489.32" width="27.00" height="37.68" fill="#4ea72e"/><rect x="1210.94" y="486.18" width="27.00" height="40.82" fill="#4ea72e"/><rect x="1246.42" y="479.90" width="27.00" height="47.10" fill="#4ea72e"/><rect x="1281.90" y="464.20" width="27.00" height="62.80" fill="#4ea72e"/><rect x="1317.38" y="500.31" width="27.00" height="26.69" fill="#4ea72e"/><rect x="1352.86" y="496.86" width="27.00" height="30.14" fill="#4ea72e"/><rect x="1388.34" y="489.32" width="27.00" height="37.68" fill="#4ea72e"/><rect x="1423.82" y="486.18" width="27.00" height="40.82" fill="#4ea72e"/><rect x="1459.30" y="479.90" width="27.00" height="47.10" fill="#4ea72e"/><line x1="390.6" y1="527.5" x2="1490.7" y2="527.5" stroke="#d9d9d9" stroke-width="1"/><path d="M408.40 494.97 C414.31 493.61 432.05 487.28 443.88 486.81 C455.71 486.34 467.53 490.37 479.36 492.15 C491.19 493.93 503.01 495.70 514.84 497.48 C526.67 499.26 538.49 504.60 550.32 502.82 C562.15 501.04 573.97 488.12 585.80 486.81 C597.63 485.50 609.45 493.87 621.28 494.97 C633.11 496.07 644.93 493.19 656.76 493.40 C668.59 493.61 680.41 494.55 692.24 496.23 C704.07 497.90 715.89 502.56 727.72 503.45 C739.55 504.34 751.37 502.30 763.20 501.57 C775.03 500.83 786.85 499.79 798.68 499.05 C810.51 498.32 822.33 497.85 834.16 497.17 C845.99 496.49 857.81 495.81 869.64 494.97 C881.47 494.13 893.29 493.51 905.12 492.15 C916.95 490.79 928.77 489.90 940.60 486.81 C952.43 483.72 964.25 470.69 976.08 473.62 C987.91 476.55 999.73 499.79 1011.56 504.39 C1023.39 509.00 1035.21 503.03 1047.04 501.25 C1058.87 499.47 1070.69 495.23 1082.52 493.72 C1094.35 492.20 1106.17 491.57 1118.00 492.15 C1129.83 492.72 1141.65 496.70 1153.48 497.17 C1165.31 497.64 1177.13 495.81 1188.96 494.97 C1200.79 494.13 1212.61 493.51 1224.44 492.15 C1236.27 490.79 1248.09 489.90 1259.92 486.81 C1271.75 483.72 1283.57 470.69 1295.40 473.62 C1307.23 476.55 1319.05 499.79 1330.88 504.39 C1342.71 509.00 1354.53 502.82 1366.36 501.25 C1378.19 499.68 1390.01 496.49 1401.84 494.97 C1413.67 493.45 1425.49 493.51 1437.32 492.15 C1449.15 490.79 1466.89 487.70 1472.80 486.81" fill="none" stroke="#262626" stroke-width="2.2" stroke-linecap="round"/><rect x="828.8" y="568" width="25.7" height="6.5" fill="#4ea72e"/><line x1="957.3" y1="571" x2="983.3" y2="571" stroke="#262626" stroke-width="2"/></svg>
<div class="t" style="left:398.89px;top:470.13px;font-size:11.40px;color:#404040;">120</div>
<div class="t" style="left:398.89px;top:506.48px;font-size:11.40px;color:#2e3d2a;">102</div>
<div class="t" style="left:405.23px;top:537.91px;font-size:11.40px;color:#595959;">1</div>
<div class="t" style="left:434.37px;top:460.71px;font-size:11.40px;color:#404040;">150</div>
<div class="t" style="left:434.37px;top:498.32px;font-size:11.40px;color:#2e3d2a;">128</div>
<div class="t" style="left:440.71px;top:537.91px;font-size:11.40px;color:#595959;">2</div>
<div class="t" style="left:469.85px;top:466.99px;font-size:11.40px;color:#404040;">130</div>
<div class="t" style="left:470.70px;top:503.66px;font-size:11.40px;color:#2e3d2a;">111</div>
<div class="t" style="left:476.19px;top:537.91px;font-size:11.40px;color:#595959;">3</div>
<div class="t" style="left:505.75px;top:473.27px;font-size:11.40px;color:#404040;">110</div>
<div class="t" style="left:508.50px;top:508.99px;font-size:11.40px;color:#2e3d2a;">94</div>
<div class="t" style="left:511.67px;top:537.91px;font-size:11.40px;color:#595959;">4</div>
<div class="t" style="left:543.98px;top:479.55px;font-size:11.40px;color:#404040;">90</div>
<div class="t" style="left:543.98px;top:514.33px;font-size:11.40px;color:#2e3d2a;">77</div>
<div class="t" style="left:547.15px;top:537.91px;font-size:11.40px;color:#595959;">5</div>
<div class="t" style="left:576.29px;top:460.71px;font-size:11.40px;color:#404040;">150</div>
<div class="t" style="left:576.29px;top:498.32px;font-size:11.40px;color:#2e3d2a;">128</div>
<div class="t" style="left:582.63px;top:537.91px;font-size:11.40px;color:#595959;">6</div>
<div class="t" style="left:611.77px;top:470.13px;font-size:11.40px;color:#404040;">120</div>
<div class="t" style="left:611.77px;top:506.48px;font-size:11.40px;color:#2e3d2a;">102</div>
<div class="t" style="left:618.11px;top:537.91px;font-size:11.40px;color:#595959;">7</div>
<div class="t" style="left:647.25px;top:468.25px;font-size:11.40px;color:#404040;">126</div>
<div class="t" style="left:647.25px;top:504.91px;font-size:11.40px;color:#2e3d2a;">107</div>
<div class="t" style="left:653.59px;top:537.91px;font-size:11.40px;color:#595959;">8</div>
<div class="t" style="left:683.15px;top:471.70px;font-size:11.40px;color:#404040;">115</div>
<div class="t" style="left:685.90px;top:507.74px;font-size:11.40px;color:#2e3d2a;">98</div>
<div class="t" style="left:689.07px;top:537.91px;font-size:11.40px;color:#595959;">9</div>
<div class="t" style="left:721.38px;top:480.18px;font-size:11.40px;color:#404040;">88</div>
<div class="t" style="left:721.38px;top:514.96px;font-size:11.40px;color:#2e3d2a;">75</div>
<div class="t" style="left:721.38px;top:537.91px;font-size:11.40px;color:#595959;">10</div>
<div class="t" style="left:756.86px;top:477.98px;font-size:11.40px;color:#404040;">95</div>
<div class="t" style="left:756.86px;top:513.08px;font-size:11.40px;color:#2e3d2a;">81</div>
<div class="t" style="left:757.29px;top:537.91px;font-size:11.40px;color:#595959;">11</div>
<div class="t" style="left:789.17px;top:474.84px;font-size:11.40px;color:#404040;">105</div>
<div class="t" style="left:792.34px;top:510.56px;font-size:11.40px;color:#2e3d2a;">89</div>
<div class="t" style="left:792.34px;top:537.91px;font-size:11.40px;color:#595959;">12</div>
<div class="t" style="left:825.07px;top:472.64px;font-size:11.40px;color:#404040;">112</div>
<div class="t" style="left:827.82px;top:508.68px;font-size:11.40px;color:#2e3d2a;">95</div>
<div class="t" style="left:827.82px;top:537.91px;font-size:11.40px;color:#595959;">13</div>
<div class="t" style="left:860.13px;top:470.13px;font-size:11.40px;color:#404040;">120</div>
<div class="t" style="left:860.13px;top:506.48px;font-size:11.40px;color:#2e3d2a;">102</div>
<div class="t" style="left:863.30px;top:537.91px;font-size:11.40px;color:#595959;">14</div>
<div class="t" style="left:895.61px;top:466.99px;font-size:11.40px;color:#404040;">130</div>
<div class="t" style="left:896.46px;top:503.66px;font-size:11.40px;color:#2e3d2a;">111</div>
<div class="t" style="left:898.78px;top:537.91px;font-size:11.40px;color:#595959;">15</div>
<div class="t" style="left:931.09px;top:460.71px;font-size:11.40px;color:#404040;">150</div>
<div class="t" style="left:931.09px;top:498.32px;font-size:11.40px;color:#2e3d2a;">128</div>
<div class="t" style="left:934.26px;top:537.91px;font-size:11.40px;color:#595959;">16</div>
<div class="t" style="left:966.57px;top:445.01px;font-size:11.40px;color:#404040;">200</div>
<div class="t" style="left:966.57px;top:485.13px;font-size:11.40px;color:#2e3d2a;">170</div>
<div class="t" style="left:969.74px;top:537.91px;font-size:11.40px;color:#595959;">17</div>
<div class="t" style="left:1005.22px;top:481.12px;font-size:11.40px;color:#404040;">85</div>
<div class="t" style="left:1005.22px;top:515.90px;font-size:11.40px;color:#2e3d2a;">72</div>
<div class="t" style="left:1005.22px;top:537.91px;font-size:11.40px;color:#595959;">18</div>
<div class="t" style="left:1040.70px;top:477.67px;font-size:11.40px;color:#404040;">96</div>
<div class="t" style="left:1040.70px;top:512.76px;font-size:11.40px;color:#2e3d2a;">82</div>
<div class="t" style="left:1040.70px;top:537.91px;font-size:11.40px;color:#595959;">19</div>
<div class="t" style="left:1073.01px;top:468.56px;font-size:11.40px;color:#404040;">125</div>
<div class="t" style="left:1073.01px;top:505.23px;font-size:11.40px;color:#2e3d2a;">106</div>
<div class="t" style="left:1076.18px;top:537.91px;font-size:11.40px;color:#595959;">20</div>
<div class="t" style="left:1108.49px;top:466.99px;font-size:11.40px;color:#404040;">130</div>
<div class="t" style="left:1109.34px;top:503.66px;font-size:11.40px;color:#2e3d2a;">111</div>
<div class="t" style="left:1111.66px;top:537.91px;font-size:11.40px;color:#595959;">21</div>
<div class="t" style="left:1144.39px;top:472.64px;font-size:11.40px;color:#404040;">112</div>
<div class="t" style="left:1147.14px;top:508.68px;font-size:11.40px;color:#2e3d2a;">95</div>
<div class="t" style="left:1147.14px;top:537.91px;font-size:11.40px;color:#595959;">22</div>
<div class="t" style="left:1179.45px;top:470.13px;font-size:11.40px;color:#404040;">120</div>
<div class="t" style="left:1179.45px;top:506.48px;font-size:11.40px;color:#2e3d2a;">102</div>
<div class="t" style="left:1182.62px;top:537.91px;font-size:11.40px;color:#595959;">23</div>
<div class="t" style="left:1214.93px;top:466.99px;font-size:11.40px;color:#404040;">130</div>
<div class="t" style="left:1215.78px;top:503.66px;font-size:11.40px;color:#2e3d2a;">111</div>
<div class="t" style="left:1218.10px;top:537.91px;font-size:11.40px;color:#595959;">24</div>
<div class="t" style="left:1250.41px;top:460.71px;font-size:11.40px;color:#404040;">150</div>
<div class="t" style="left:1250.41px;top:498.32px;font-size:11.40px;color:#2e3d2a;">128</div>
<div class="t" style="left:1253.58px;top:537.91px;font-size:11.40px;color:#595959;">25</div>
<div class="t" style="left:1285.89px;top:445.01px;font-size:11.40px;color:#404040;">200</div>
<div class="t" style="left:1285.89px;top:485.13px;font-size:11.40px;color:#2e3d2a;">170</div>
<div class="t" style="left:1289.06px;top:537.91px;font-size:11.40px;color:#595959;">26</div>
<div class="t" style="left:1324.54px;top:481.12px;font-size:11.40px;color:#404040;">85</div>
<div class="t" style="left:1324.54px;top:515.90px;font-size:11.40px;color:#2e3d2a;">72</div>
<div class="t" style="left:1324.54px;top:537.91px;font-size:11.40px;color:#595959;">27</div>
<div class="t" style="left:1360.02px;top:477.67px;font-size:11.40px;color:#404040;">96</div>
<div class="t" style="left:1360.02px;top:512.76px;font-size:11.40px;color:#2e3d2a;">82</div>
<div class="t" style="left:1360.02px;top:537.91px;font-size:11.40px;color:#595959;">28</div>
<div class="t" style="left:1392.33px;top:470.13px;font-size:11.40px;color:#404040;">120</div>
<div class="t" style="left:1392.33px;top:506.48px;font-size:11.40px;color:#2e3d2a;">102</div>
<div class="t" style="left:1395.50px;top:537.91px;font-size:11.40px;color:#595959;">29</div>
<div class="t" style="left:1427.81px;top:466.99px;font-size:11.40px;color:#404040;">130</div>
<div class="t" style="left:1428.66px;top:503.66px;font-size:11.40px;color:#2e3d2a;">111</div>
<div class="t" style="left:1430.98px;top:537.91px;font-size:11.40px;color:#595959;">30</div>
<div class="t" style="left:1463.29px;top:460.71px;font-size:11.40px;color:#404040;">150</div>
<div class="t" style="left:1463.29px;top:498.32px;font-size:11.40px;color:#2e3d2a;">128</div>
<div class="t" style="left:1466.46px;top:537.91px;font-size:11.40px;color:#595959;">31</div>
<div class="t" style="left:858.00px;top:565.00px;font-size:12.00px;color:#595959;transform:scaleX(0.9172);transform-origin:0 0;">Roupa Recebida</div>
<div class="t" style="left:987.40px;top:565.00px;font-size:12.00px;color:#595959;transform:scaleX(0.8991);transform-origin:0 0;">Roupa Lavada</div>
<div class="a" style="left:375.1px;top:635px;width:289.7px;height:176.3px;background:#f2f2f2;border:1px solid #d9d9d9"></div>
<svg class="a" style="left:0;top:0" width="700" height="820" viewBox="0 0 700 820"><path d="M516.00 641.70 A68.00 68.00 0 1 1 478.10 653.24 L496.21 680.23 A35.50 35.50 0 1 0 516.00 674.20 Z" fill="#f9bc00" stroke="#fff" stroke-width="1.6" stroke-linejoin="round"/><path d="M478.10 653.24 A68.00 68.00 0 0 1 516.00 641.70 L516.00 674.20 A35.50 35.50 0 0 0 496.21 680.23 Z" fill="#4ea72e" stroke="#fff" stroke-width="1.6" stroke-linejoin="round"/></svg>
<div class="t" style="left:493.39px;top:654.73px;font-size:11.50px;color:#fff;">9%</div>
<div class="t" style="left:518.48px;top:754.23px;font-size:11.50px;color:#fff;">91%</div>
<div class="a" style="left:422.5px;top:785px;width:6px;height:6px;background:#f9bc00"></div>
<div class="t" style="left:431.00px;top:782.30px;font-size:12.00px;color:#595959;transform:scaleX(0.8965);transform-origin:0 0;">Roupa Lavada</div>
<div class="a" style="left:541.5px;top:785px;width:6px;height:6px;background:#4ea72e"></div>
<div class="t" style="left:550.00px;top:782.30px;font-size:12.00px;color:#595959;transform:scaleX(0.9110);transform-origin:0 0;">Reprocessada</div>
<div class="a" style="left:682.3px;top:634px;width:391.1px;height:177.3px;background:#fff;border:1px solid #d9d9d9"></div>
<div class="a" style="left:700.7px;top:640.7px;width:355.1px;height:137.8px;background:#f2f2f2"></div>
<div class="a" style="left:724.3px;top:690.0px;width:69.8px;height:88.5px;background:#f9bc00"></div>
<div class="a" style="left:843.2px;top:704.0px;width:69.1px;height:74.5px;background:#4ea72e"></div>
<div class="a" style="left:961.3px;top:771.9px;width:69.9px;height:6.6px;background:#a5a5a5"></div>
<div class="t" style="left:744.48px;top:671.30px;font-size:12.00px;color:#404040;">3.840</div>
<div class="t" style="left:862.88px;top:684.30px;font-size:12.00px;color:#404040;">3.264</div>
<div class="t" style="left:986.18px;top:752.30px;font-size:12.00px;color:#404040;">307</div>
<div class="a" style="left:716.5px;top:786px;width:6.5px;height:6.5px;background:#f9bc00"></div>
<div class="t" style="left:726.00px;top:783.30px;font-size:12.00px;color:#595959;transform:scaleX(0.9060);transform-origin:0 0;">Roupa Recebida</div>
<div class="a" style="left:833.0px;top:786px;width:6.5px;height:6.5px;background:#4ea72e"></div>
<div class="t" style="left:844.00px;top:783.30px;font-size:12.00px;color:#595959;transform:scaleX(0.8901);transform-origin:0 0;">Roupa Lavada</div>
<div class="a" style="left:940.0px;top:786px;width:6.5px;height:6.5px;background:#a5a5a5"></div>
<div class="t" style="left:950.00px;top:783.30px;font-size:12.00px;color:#595959;transform:scaleX(0.9045);transform-origin:0 0;">Reprocessada</div>
<div class="a" style="left:1091.4px;top:635px;width:415px;height:176.2px;background:#fff;border:1px solid #d9d9d9"></div>
<div class="a" style="left:1099.5px;top:655.2px;width:235.5px;height:138.2px;background:#f2f2f2"></div>
<div class="a" style="left:1111.5px;top:735.8px;width:35.8px;height:57.6px;background:#4ea72e"></div>
<div class="t" style="left:1117.72px;top:716.60px;font-size:12.00px;color:#262626;">0,08</div>
<div class="a" style="left:1147.3px;top:680.0px;width:35.4px;height:113.4px;background:#f9bc00"></div>
<div class="t" style="left:1153.32px;top:660.80px;font-size:12.00px;color:#262626;">0,16</div>
<div class="a" style="left:1182.7px;top:725.0px;width:34.8px;height:68.4px;background:#ee4c32"></div>
<div class="t" style="left:1188.42px;top:705.80px;font-size:12.00px;color:#262626;">0,10</div>
<div class="a" style="left:1217.5px;top:759.2px;width:34.7px;height:34.2px;background:#acd8a0"></div>
<div class="t" style="left:1223.17px;top:740.00px;font-size:12.00px;color:#262626;">0,05</div>
<div class="a" style="left:1252.2px;top:781.0px;width:35.1px;height:12.4px;background:#fde9a0"></div>
<div class="t" style="left:1258.07px;top:761.80px;font-size:12.00px;color:#262626;">0,02</div>
<div class="a" style="left:1287.3px;top:748.2px;width:35.1px;height:45.2px;background:#f5aaa3"></div>
<div class="t" style="left:1293.17px;top:729.00px;font-size:12.00px;color:#262626;">0,07</div>
<div class="a" style="left:1342px;top:651.1px;width:7px;height:7px;background:#4ea72e"></div>
<div class="t" style="left:1352.30px;top:648.70px;font-size:12.00px;color:#262626;transform:scaleX(0.9466);transform-origin:0 0;">Médicos</div>
<div class="a" style="left:1342px;top:679.7px;width:7px;height:7px;background:#f9bc00"></div>
<div class="t" style="left:1352.30px;top:677.30px;font-size:12.00px;color:#262626;transform:scaleX(0.9554);transform-origin:0 0;">Enfermeiros</div>
<div class="a" style="left:1342px;top:708.3px;width:7px;height:7px;background:#ee4c32"></div>
<div class="t" style="left:1352.30px;top:705.90px;font-size:12.00px;color:#262626;transform:scaleX(0.9256);transform-origin:0 0;">Funcionários de Limpeza</div>
<div class="a" style="left:1342px;top:736.9px;width:7px;height:7px;background:#acd8a0"></div>
<div class="t" style="left:1352.30px;top:734.50px;font-size:12.00px;color:#262626;transform:scaleX(0.9241);transform-origin:0 0;">Funcionários da cozinha</div>
<div class="a" style="left:1342px;top:764.5px;width:7px;height:7px;background:#fde9a0"></div>
<div class="t" style="left:1352.30px;top:762.10px;font-size:12.00px;color:#262626;transform:scaleX(0.9404);transform-origin:0 0;">Funcionários da lavanderia</div>
<div class="a" style="left:1342px;top:792.8px;width:7px;height:7px;background:#f5aaa3"></div>
<div class="t" style="left:1352.30px;top:790.40px;font-size:12.00px;color:#262626;transform:scaleX(0.9440);transform-origin:0 0;">Outros Funcionários</div>
<div class="a" style="left:0;top:0;width:1px;height:940px;background:#8a8a8a"></div>
<div class="a" style="left:1599px;top:0;width:1px;height:940px;background:#707070"></div>
</body></html>
